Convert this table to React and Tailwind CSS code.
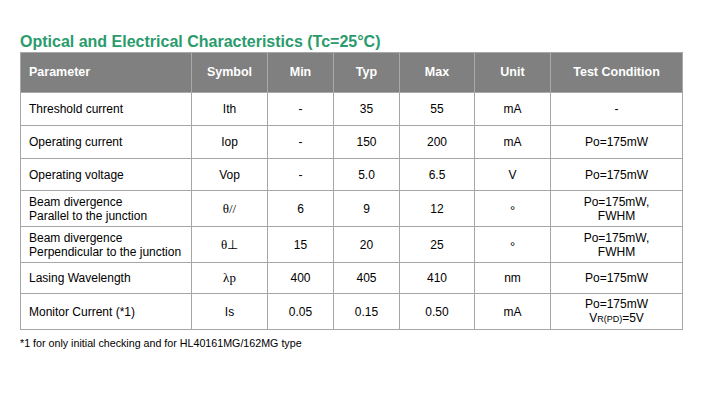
const COLS = [
  { label: 'Parameter', w: 'w-[171px]', align: 'text-left pl-2' },
  { label: 'Symbol', w: 'w-[76px]' },
  { label: 'Min', w: 'w-[66px]' },
  { label: 'Typ', w: 'w-[66px]' },
  { label: 'Max', w: 'w-[75px]' },
  { label: 'Unit', w: 'w-[76px]' },
  { label: 'Test Condition', w: 'w-[132px]' },
];

const Sym = ({ children }) => (
  <span className="font-['Liberation_Serif',serif] text-[13px]">{children}</span>
);

const Deg = () => <span className="relative top-[2px] text-[13px]">°</span>;

const ROWS = [
  { h: 'h-[33px]', param: 'Threshold current', sym: 'Ith', min: '-', typ: '35', max: '55', unit: 'mA', cond: '-' },
  { h: 'h-[33px]', param: 'Operating current', sym: 'Iop', min: '-', typ: '150', max: '200', unit: 'mA', cond: 'Po=175mW' },
  { h: 'h-[32px]', param: 'Operating voltage', sym: 'Vop', min: '-', typ: '5.0', max: '6.5', unit: 'V', cond: 'Po=175mW' },
  {
    h: 'h-[36px]',
    param: (<>Beam divergence<br />Parallel to the junction</>),
    sym: <Sym>θ//</Sym>,
    min: '6', typ: '9', max: '12', unit: <Deg />,
    cond: (<>Po=175mW,<br />FWHM</>),
  },
  {
    h: 'h-[36px]',
    param: (<>Beam divergence<br />Perpendicular to the junction</>),
    sym: <Sym>θ⊥</Sym>,
    min: '15', typ: '20', max: '25', unit: <Deg />,
    cond: (<>Po=175mW,<br />FWHM</>),
  },
  { h: 'h-[31px]', param: 'Lasing Wavelength', sym: <Sym>λp</Sym>, min: '400', typ: '405', max: '410', unit: 'nm', cond: 'Po=175mW' },
  {
    h: 'h-[36px]',
    param: 'Monitor Current (*1)',
    sym: 'Is', min: '0.05', typ: '0.15', max: '0.50', unit: 'mA',
    cond: (<>Po=175mW<br />V<span className="text-[9px]">R(PD)</span>=5V</>),
  },
];

export default function App() {
  return (
    <div className="w-[710px] h-[416px] bg-white font-['Liberation_Sans',Arial,sans-serif] text-black pt-[31px] pl-5">
      <h1 className="text-[16px] leading-[21px] font-bold text-[#2a9b6c]">
        Optical and Electrical Characteristics (Tc=25°C)
      </h1>
      <table className="table-fixed border-collapse w-[662px]">
        <thead>
          <tr className="h-[40px] bg-[#808080]">
            {COLS.map((c) => (
              <th
                key={c.label}
                className={`${c.w} ${c.align || 'text-center'} border border-[#a9a9a9] text-white font-bold text-[12.5px]`}
              >
                {c.label}
              </th>
            ))}
          </tr>
        </thead>
        <tbody>
          {ROWS.map((r, i) => (
            <tr key={i} className={`${r.h} text-[12px] leading-[14px]`}>
              <td className="border border-[#a6a6a6] text-left pl-2">{r.param}</td>
              <td className="border border-[#a6a6a6] text-center">{r.sym}</td>
              <td className="border border-[#a6a6a6] text-center">{r.min}</td>
              <td className="border border-[#a6a6a6] text-center">{r.typ}</td>
              <td className="border border-[#a6a6a6] text-center">{r.max}</td>
              <td className="border border-[#a6a6a6] text-center">{r.unit}</td>
              <td className="border border-[#a6a6a6] text-center">{r.cond}</td>
            </tr>
          ))}
        </tbody>
      </table>
      <p className="text-[10.7px] leading-[14px] mt-[6px]">
        *1 for only initial checking and for HL40161MG/162MG type
      </p>
    </div>
  );
}
